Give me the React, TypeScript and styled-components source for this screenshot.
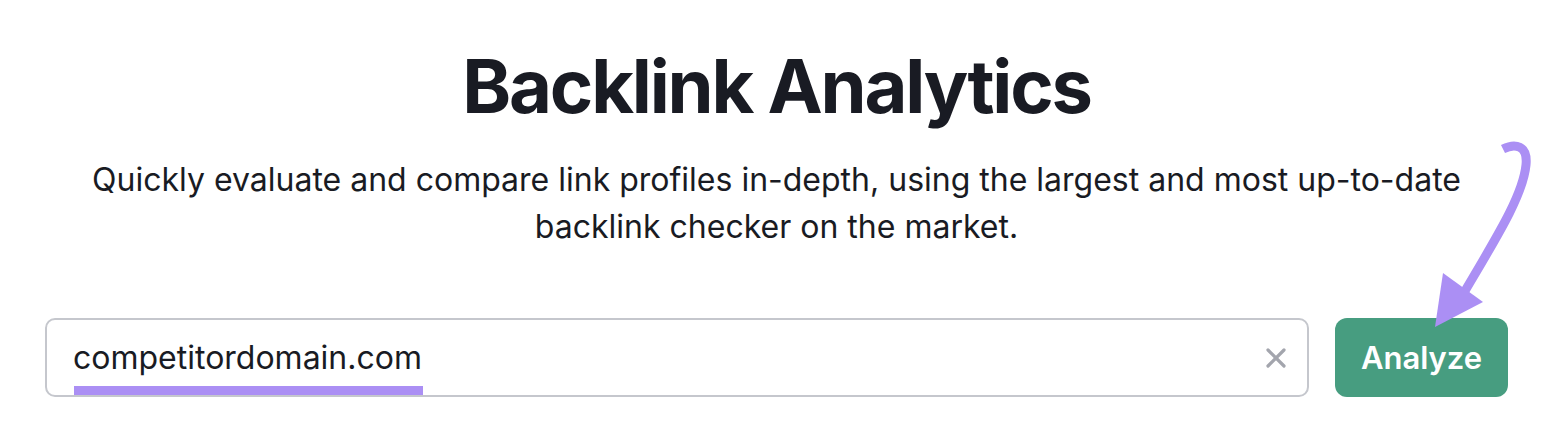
import styled, { createGlobalStyle } from 'styled-components';

const GlobalStyle = createGlobalStyle`
  html, body {
    margin: 0;
    padding: 0;
    background: #ffffff;
  }
  body {
    font-family: Inter, "Noto Sans", sans-serif;
    color: #191b23;
  }
`;

const Page = styled.div`
  position: relative;
  width: 1558px;
  height: 432px;
  overflow: hidden;
  box-sizing: border-box;
  padding: 42px 50px 0 45px;
  display: flex;
  flex-direction: column;
  align-items: center;
`;

const Title = styled.h1`
  margin: 0;
  font-size: 74px;
  line-height: 88px;
  font-weight: 700;
  letter-spacing: -2.2px;
  color: #191b23;
`;

const Subtitle = styled.p`
  margin: 26px 0 0;
  font-size: 32px;
  line-height: 47px;
  text-align: center;
  color: #191b23;
  white-space: nowrap;
`;

const SearchRow = styled.div`
  align-self: stretch;
  margin-top: 68px;
  display: flex;
  gap: 26px;
  height: 79px;
`;

const InputBox = styled.div`
  flex: 1;
  display: flex;
  align-items: center;
  box-sizing: border-box;
  border: 2px solid #c5c7cd;
  border-radius: 10px;
  padding: 0 20px 0 26px;
`;

const Value = styled.span`
  position: relative;
  font-size: 32px;
  line-height: 39px;
  color: #191b23;
`;

const Underline = styled.span`
  position: absolute;
  left: 1px;
  right: -1px;
  bottom: -18px;
  height: 9px;
  background: #ab8ff4;
`;

const Clear = styled.span`
  margin-left: auto;
  display: flex;
  align-items: center;
`;

const Button = styled.button`
  width: 173px;
  border: none;
  border-radius: 12px;
  background: #479d80;
  color: #ffffff;
  font-family: Inter, "Noto Sans", sans-serif;
  font-size: 31px;
  font-weight: 600;
  cursor: pointer;
`;

const Arrow = styled.svg`
  position: absolute;
  left: 1420px;
  top: 135px;
  pointer-events: none;
`;

export default function App() {
  return (
    <>
      <GlobalStyle />
      <Page>
        <Title>Backlink Analytics</Title>
        <Subtitle>
          Quickly evaluate and compare link profiles in-depth, using the largest and most up-to-date
          <br />
          backlink checker on the market.
        </Subtitle>
        <SearchRow>
          <InputBox>
            <Value>
              competitordomain.com
              <Underline />
            </Value>
            <Clear>
              <svg width="22" height="22" viewBox="0 0 22 22">
                <path d="M3 3 L19 19 M19 3 L3 19" stroke="#a3a5ad" strokeWidth="3.2" strokeLinecap="round" />
              </svg>
            </Clear>
          </InputBox>
          <Button>Analyze</Button>
        </SearchRow>
        <Arrow width="130" height="200" viewBox="0 0 130 200">
          <path
            d="M83 14 C95 8 108 10 106 30 C103 60 78 100 45 156"
            fill="none"
            stroke="#ab8ff4"
            strokeWidth="9"
            strokeLinecap="butt"
          />
          <polygon points="23,138 63,167 15,192" fill="#ab8ff4" />
        </Arrow>
      </Page>
    </>
  );
}
